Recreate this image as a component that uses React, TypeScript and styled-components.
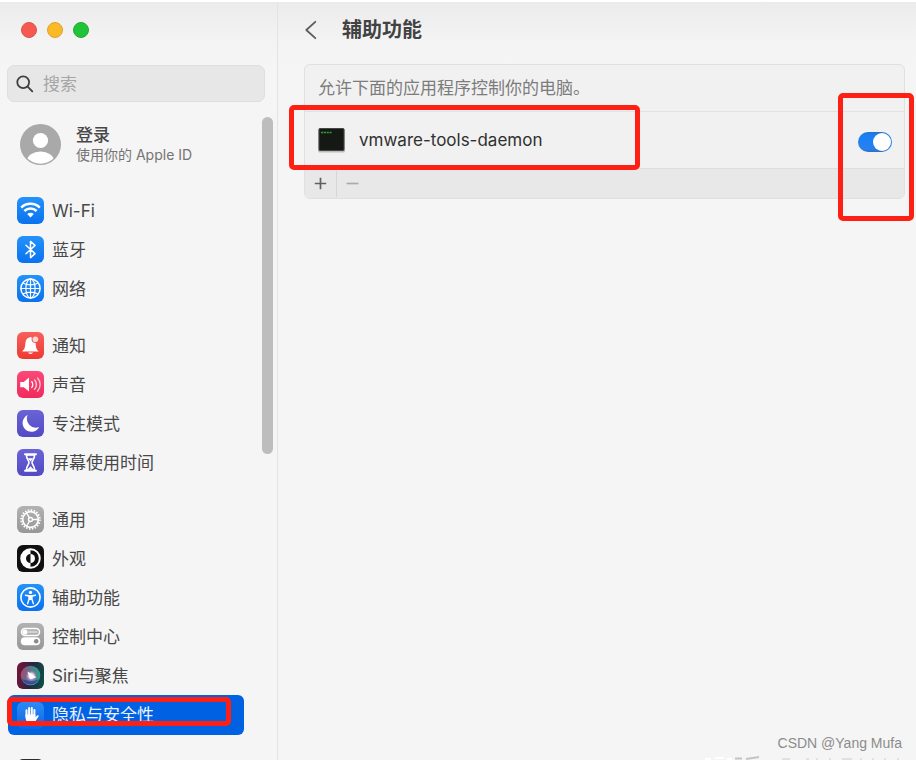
import React, { useState } from "react";
import styled, { createGlobalStyle, css } from "styled-components";

const GlobalStyle = createGlobalStyle`
  *, *::before, *::after { box-sizing: border-box; }
  html, body { margin: 0; background: #f5f5f5; }
  body, button, input {
    font-family: Inter, "Noto Sans CJK SC", sans-serif;
    color: #484848;
  }
`;

const Window = styled.div`
  position: relative;
  display: flex;
  height: 100vh;
  overflow: hidden;
  border-top: 2px solid #ffffff;
  background: linear-gradient(#ebebeb, #f3f3f3 36px, #f5f5f5 64px);
`;

const Sidebar = styled.aside`
  display: flex;
  flex-direction: column;
  flex: 0 0 278px;
  min-width: 0;
  border-right: 1px solid #e3e3e3;
`;

const TrafficLights = styled.div`
  display: flex;
  gap: 10px;
  padding: 20px 21px 27px;
`;

const Light = styled.button<{ $color: string; $edge: string }>`
  width: 16px;
  height: 16px;
  padding: 0;
  border: 1px solid ${(p) => p.$edge};
  border-radius: 50%;
  background: ${(p) => p.$color};
`;

const SearchBox = styled.label`
  display: flex;
  align-items: center;
  gap: 9px;
  height: 37px;
  margin: 0 12px 15px 7px;
  padding: 0 8px;
  border: 1px solid #dedede;
  border-radius: 7px;
  background: #e7e7e7;
`;

const SearchInput = styled.input`
  flex: 1;
  min-width: 0;
  padding: 0;
  border: 0;
  outline: 0;
  background: transparent;
  font-size: 17px;
  &::placeholder { color: #a6a6a6; opacity: 1; }
`;

const SidebarBody = styled.div`
  display: flex;
  flex: 1;
  min-height: 0;
`;

const SidebarList = styled.div`
  flex: 1;
  min-width: 0;
`;

const ScrollThumb = styled.div`
  width: 11px;
  height: 337px;
  margin-right: 4px;
  border-radius: 6px;
  background: #bdbdbd;
`;

const Account = styled.button`
  display: flex;
  align-items: center;
  gap: 15px;
  width: 100%;
  height: 54px;
  margin-bottom: 20px;
  padding: 0 0 0 20px;
  border: 0;
  background: transparent;
  text-align: left;
`;

const AccountText = styled.span`
  display: flex;
  flex-direction: column;
`;

const AccountName = styled.span`
  font-size: 17px;
  line-height: 20px;
  font-weight: 500;
`;

const AccountHint = styled.span`
  font-size: 14px;
  line-height: 19px;
  color: #747474;
`;

const Group = styled.ul`
  margin: 0 0 18px;
  padding: 0 0 0 8px;
  list-style: none;
`;

const Item = styled.li`
  position: relative;
  width: 236px;
`;

const ItemLink = styled.a<{ $selected?: boolean }>`
  display: flex;
  align-items: center;
  gap: 8px;
  height: 39px;
  padding: 0 9px;
  border-radius: 6px;
  color: #484848;
  font-size: 17px;
  line-height: 24px;
  text-decoration: none;
  ${(p) => p.$selected && css`
    height: 40px;
    background: #0061e3;
    color: #e9f1ff;
  `}
`;

const Tile = styled.span<{ $bg: string }>`
  display: grid;
  place-items: center;
  flex: none;
  width: 27px;
  height: 27px;
  border-radius: 6px;
  background: ${(p) => p.$bg};
`;

const markStyle = css`
  position: absolute;
  border: 5px solid #ff2015;
  border-radius: 5px;
  pointer-events: none;
`;

const PrivacyMark = styled.span`
  ${markStyle}
  inset: 2px 13px 9px -1px;
`;

const AppMark = styled.span`
  ${markStyle}
  top: -7px;
  left: -16px;
  width: 351px;
  height: 65px;
`;

const SwitchMark = styled.span`
  ${markStyle}
  top: -19px;
  right: -10px;
  width: 76px;
  height: 128px;
`;

const Main = styled.main`
  flex: 1;
  min-width: 0;
  padding: 0 11px 0 26px;
`;

const TitleBar = styled.header`
  display: flex;
  align-items: center;
  gap: 24px;
  height: 55px;
  margin-bottom: 7px;
`;

const BackButton = styled.button`
  display: flex;
  padding: 0;
  border: 0;
  background: transparent;
`;

const Title = styled.h1`
  margin: 0;
  font-size: 20px;
  line-height: 28px;
  font-weight: 700;
  color: #424242;
`;

const Panel = styled.section`
  border: 1px solid #e0e0e0;
  border-radius: 6px;
  background: #f1f1f1;
`;

const PanelNote = styled.p`
  height: 46px;
  margin: 0;
  padding: 0 13px;
  font-size: 17px;
  line-height: 46px;
  color: #7c7c7c;
`;

const AppRow = styled.div`
  position: relative;
  display: flex;
  align-items: center;
  gap: 13px;
  height: 57px;
  padding: 0 12px;
  border-top: 1px solid #e2e2e2;
`;

const AppName = styled.label`
  flex: 1;
  font-size: 17px;
  line-height: 24px;
  color: #303030;
`;

const Switch = styled.input`
  appearance: none;
  display: flex;
  align-items: center;
  width: 34px;
  height: 20px;
  margin: 4px 0 0;
  padding: 0 1px;
  border-radius: 10px;
  background: #c9c9c9;
  &::before {
    content: "";
    width: 18px;
    height: 18px;
    border-radius: 50%;
    background: #ffffff;
  }
  &:checked {
    justify-content: flex-end;
    background: linear-gradient(#2c6fc0, #1680f5 3px, #2a80ee 17px, #2c6fc0);
  }
`;

const PanelFooter = styled.div`
  display: flex;
  align-items: center;
  height: 30px;
  border-top: 1px solid #dedede;
  border-radius: 0 0 5px 5px;
  background: #e8e8e8;
`;

const FooterButton = styled.button`
  display: grid;
  place-items: center;
  width: 31px;
  height: 26px;
  padding: 0;
  border: 0;
  background: transparent;
  & + & { border-left: 1px solid #d6d6d6; }
`;

const Credit = styled.footer`
  position: absolute;
  right: 14px;
  bottom: 7px;
  font-family: "Liberation Sans", sans-serif;
  font-size: 14px;
  line-height: 20px;
  color: #8c8c8c;
`;

const FaintStamp = styled.svg`
  position: absolute;
  right: 10px;
  bottom: 0;
`;

const blue = "linear-gradient(#2492fb, #0a72ee)";
const red = "linear-gradient(#f8605c, #ee3932)";
const pink = "linear-gradient(#fb4a78, #f02a5c)";
const purple = "linear-gradient(#6a64d6, #5249c4)";
const gray = "linear-gradient(#b2b2b2, #979797)";
const black = "#101010";

const Svg = ({ children }: { children: React.ReactNode }) => (
  <svg width="27" height="27" viewBox="0 0 27 27" fill="none" stroke="#fff"
    strokeLinecap="round" strokeLinejoin="round" aria-hidden="true">{children}</svg>
);

const WifiIcon = () => (
  <Svg>
    <path d="M4.2 10.6C9.3 5.5 17.7 5.5 22.8 10.6" strokeWidth="2.5" strokeLinecap="butt" />
    <path d="M7.4 14C10.8 10.7 16.2 10.7 19.6 14" strokeWidth="2.5" strokeLinecap="butt" />
    <path d="M10.2 17C12 15.3 15 15.3 16.8 17L13.5 20.6Z" fill="#fff" stroke="none" />
  </Svg>
);

const BluetoothIcon = () => (
  <Svg><path d="M9 9.3L18 17.6L13.5 21.6V5.4L18 9.4L9 17.7" strokeWidth="1.5" /></Svg>
);

const GlobeIcon = () => (
  <Svg>
    <g strokeWidth="1.2">
      <circle cx="13.5" cy="13.5" r="9.6" strokeWidth="1.5" />
      <ellipse cx="13.5" cy="13.5" rx="4.6" ry="9.6" />
      <path d="M13.5 4V23M4 13.5H23M6 8C10 10.6 17 10.6 21 8M6 19C10 16.4 17 16.4 21 19" />
    </g>
  </Svg>
);

const BellIcon = () => (
  <Svg>
    <g stroke="none" fill="#fff">
      <path d="M5.2 19.4C7.6 17 8 15.8 8.3 11.8C8.5 8 10.2 5.9 12.5 5.6C13.3 4.6 14.2 4.7 14.9 5.7C13.8 8.3 15.6 11 18.6 10.9C18.9 15.5 19.4 17.2 21.8 19.4Z" />
      <path d="M11 20.6H16C15.5 22.5 11.5 22.5 11 20.6Z" />
      <circle cx="18.4" cy="7.3" r="2.8" fill="#ffd9d5" />
    </g>
  </Svg>
);

const SoundIcon = () => (
  <Svg>
    <path d="M3.2 11V16.2H6.8L12 20.6V6.6L6.8 11Z" fill="#fff" stroke="none" />
    <path d="M14.8 10.8C16 12.3 16 15 14.8 16.4" strokeWidth="1.4" />
    <path d="M17.6 8.9C20 11.5 20 15.7 17.6 18.3" strokeWidth="1.4" stroke="#ffd2dd" />
    <path d="M20.5 7C24 10.5 24 16.7 20.5 20.2" strokeWidth="1.4" stroke="#ffc0d0" />
  </Svg>
);

const MoonIcon = () => (
  <Svg><path d="M10.6 5.1A8.8 8.8 0 1 0 22.2 17.1A9.1 9.1 0 0 1 10.6 5.1Z" fill="#fff" stroke="none" /></Svg>
);

const HourglassIcon = () => (
  <Svg>
    <path d="M8 5.2H19M8 21.8H19" strokeWidth="2" />
    <path d="M9.4 6C9.4 10.2 12 11.4 12 13.5S9.4 17 9.4 21H17.6C17.6 17 15 15.6 15 13.5S17.6 10.2 17.6 6Z" strokeWidth="1.6" />
    <path d="M10.8 9.2H16.2L13.5 12.4ZM10.2 20.8L13.5 17.2L16.8 20.8Z" fill="#fff" stroke="none" />
  </Svg>
);

const GearIcon = () => (
  <Svg>
    <circle cx="13.5" cy="13.5" r="9.4" strokeWidth="1.8" strokeDasharray="1.5 1.45" strokeLinecap="butt" />
    <circle cx="13.5" cy="13.5" r="7.8" strokeWidth="1.7" />
    <circle cx="13.5" cy="13.5" r="2" strokeWidth="1.3" />
    <path d="M15.5 13.5H21M12.5 11.8L9.6 7M12.5 15.2L9.6 20" strokeWidth="1.4" />
  </Svg>
);

const AppearanceIcon = () => (
  <Svg>
    <circle cx="13.5" cy="13.5" r="9.3" strokeWidth="1.9" />
    <path d="M13.5 4.2A9.3 9.3 0 0 0 13.5 22.8V18A4.5 4.5 0 0 1 13.5 9Z" fill="#fff" stroke="none" />
    <path d="M13.5 9A4.5 4.5 0 0 1 13.5 18Z" fill="#fff" stroke="none" />
  </Svg>
);

const AccessibilityIcon = () => (
  <Svg>
    <circle cx="13.5" cy="13.5" r="9.6" strokeWidth="1.6" />
    <circle cx="13.5" cy="8.4" r="1.7" fill="#fff" stroke="none" />
    <path d="M8.5 11.2L12 12V15.3L10.6 19.7M18.5 11.2L15 12V15.3L16.4 19.7M8.5 11.2L13.5 12L18.5 11.2" strokeWidth="1.4" />
    <path d="M12 11.5H15V16H12Z" fill="#fff" stroke="none" />
  </Svg>
);

const ControlIcon = () => (
  <Svg>
    <rect x="4.5" y="5.6" width="18" height="6.8" rx="3.4" strokeWidth="1.5" />
    <circle cx="8" cy="9" r="2.6" fill="#fff" stroke="none" />
    <path d="M11 9H19.5" stroke="#d2d2d2" strokeWidth="2.5" />
    <rect x="3.8" y="14.3" width="19.4" height="8" rx="4" fill="#fff" stroke="none" />
    <circle cx="19.2" cy="18.3" r="2.3" fill="#8d8d8d" stroke="none" />
  </Svg>
);

const SiriIcon = () => (
  <Svg>
    <defs>
      <linearGradient id="siri-ring" x1="0" y1="0" x2="1" y2="0.3">
        <stop offset="0" stopColor="#d22f62" /><stop offset="0.5" stopColor="#4f7e8c" /><stop offset="1" stopColor="#27a58a" />
      </linearGradient>
      <radialGradient id="siri-core" cx="0.52" cy="0.5" r="0.5">
        <stop offset="0" stopColor="#ffffff" /><stop offset="0.35" stopColor="#dcd0ee" />
        <stop offset="0.7" stopColor="#b65a9b" stopOpacity="0.4" /><stop offset="1" stopColor="#3558a4" stopOpacity="0" />
      </radialGradient>
    </defs>
    <circle cx="13.5" cy="13.5" r="9.8" fill="url(#siri-ring)" stroke="none" />
    <path d="M5 17C8 23.5 18 24.5 22 17C17 20 11 19 5 17Z" fill="#3948a2" stroke="none" />
    <circle cx="14" cy="14" r="7.5" fill="url(#siri-core)" stroke="none" />
    <path d="M10.4 9.5L19.4 15.2L13.2 17Z" fill="#fff" stroke="none" />
  </Svg>
);

const HandIcon = () => (
  <Svg>
    <path d="M9.5 15V8.2M12.1 13V6M14.8 13V6M17.4 14V8" strokeWidth="2" />
    <path d="M8.5 12.5H18.4V15L20.6 13.3C21.7 13 22 13.8 21.4 14.7L18.2 19.6C16.5 22.2 11.5 22.2 9.8 19.6C8.7 17.9 8.5 16 8.5 12.5Z" fill="#fff" stroke="none" />
  </Svg>
);

type Entry = { label: string; bg: string; icon: React.ReactNode; selected?: boolean };

const groups: Entry[][] = [
  [
    { label: "Wi-Fi", bg: blue, icon: <WifiIcon /> },
    { label: "蓝牙", bg: blue, icon: <BluetoothIcon /> },
    { label: "网络", bg: blue, icon: <GlobeIcon /> },
  ],
  [
    { label: "通知", bg: red, icon: <BellIcon /> },
    { label: "声音", bg: pink, icon: <SoundIcon /> },
    { label: "专注模式", bg: purple, icon: <MoonIcon /> },
    { label: "屏幕使用时间", bg: purple, icon: <HourglassIcon /> },
  ],
  [
    { label: "通用", bg: gray, icon: <GearIcon /> },
    { label: "外观", bg: black, icon: <AppearanceIcon /> },
    { label: "辅助功能", bg: blue, icon: <AccessibilityIcon /> },
    { label: "控制中心", bg: gray, icon: <ControlIcon /> },
    { label: "Siri与聚焦", bg: "linear-gradient(100deg, #7a1438, #2b2540 50%, #0b5148)", icon: <SiriIcon /> },
    { label: "隐私与安全性", bg: "linear-gradient(#2f8af5, #0b66e6)", icon: <HandIcon />, selected: true },
  ],
  [{ label: "", bg: "#2c2c2e", icon: null }],
];

export default function App() {
  const [allowed, setAllowed] = useState(true);
  return (
    <>
      <GlobalStyle />
      <Window>
        <Sidebar>
          <TrafficLights>
            <Light $color="#f75950" $edge="#d9534c" aria-label="关闭" />
            <Light $color="#fbb827" $edge="#dba431" aria-label="最小化" />
            <Light $color="#1fc438" $edge="#26a638" aria-label="缩放" />
          </TrafficLights>
          <SearchBox>
            <svg width="18" height="18" viewBox="0 0 18 18" fill="none" stroke="#3f3f3f" strokeWidth="1.8" strokeLinecap="round" aria-hidden="true">
              <circle cx="7.2" cy="7.2" r="5.9" />
              <path d="M11.6 11.6L16.3 16.3" />
            </svg>
            <SearchInput type="text" placeholder="搜索" aria-label="搜索" />
          </SearchBox>
          <SidebarBody>
            <SidebarList>
              <Account>
                <svg width="41" height="41" viewBox="0 0 41 41" aria-hidden="true">
                  <defs><clipPath id="avatar"><circle cx="20.5" cy="20.5" r="19.2" /></clipPath></defs>
                  <circle cx="20.5" cy="20.5" r="20.5" fill="#a9a9a9" />
                  <circle cx="20.5" cy="16.5" r="7.6" fill="#fff" />
                  <ellipse cx="20.5" cy="37" rx="13.5" ry="9.5" fill="#fff" clipPath="url(#avatar)" />
                </svg>
                <AccountText>
                  <AccountName>登录</AccountName>
                  <AccountHint>使用你的 Apple ID</AccountHint>
                </AccountText>
              </Account>
              <nav>
                {groups.map((group, g) => (
                  <Group key={g}>
                    {group.map((entry) => (
                      <Item key={entry.label}>
                        <ItemLink href="#" $selected={entry.selected}>
                          <Tile $bg={entry.bg}>{entry.icon}</Tile>
                          {entry.label}
                        </ItemLink>
                        {entry.selected && <PrivacyMark />}
                      </Item>
                    ))}
                  </Group>
                ))}
              </nav>
            </SidebarList>
            <ScrollThumb />
          </SidebarBody>
        </Sidebar>
        <Main>
          <TitleBar>
            <BackButton aria-label="返回">
              <svg width="14" height="20" viewBox="0 0 14 20" fill="none" stroke="#5c5c5c" strokeWidth="1.8" strokeLinecap="round" strokeLinejoin="round">
                <path d="M11.3 1.8L2.3 10L11.3 18.2" />
              </svg>
            </BackButton>
            <Title>辅助功能</Title>
          </TitleBar>
          <Panel>
            <PanelNote>允许下面的应用程序控制你的电脑。</PanelNote>
            <AppRow>
              <svg width="29" height="26" viewBox="0 0 29 26" aria-hidden="true">
                <rect x="1" y="1.5" width="27" height="24" rx="1.5" fill="#bdbdbd" />
                <rect x="2" y="1.5" width="25" height="22" rx="1" fill="#161816" stroke="#454745" />
                <path d="M4 5.5H15" stroke="#2d9a33" strokeWidth="1.6" strokeDasharray="2.2 0.6" />
              </svg>
              <AppName htmlFor="daemon">vmware-tools-daemon</AppName>
              <Switch id="daemon" type="checkbox" role="switch" checked={allowed} onChange={(e) => setAllowed(e.target.checked)} />
              <AppMark />
              <SwitchMark />
            </AppRow>
            <PanelFooter>
              <FooterButton aria-label="添加">
                <svg width="13" height="13" viewBox="0 0 13 13" stroke="#606060" strokeWidth="1.7"><path d="M6.5 0.8V12.2M0.8 6.5H12.2" /></svg>
              </FooterButton>
              <FooterButton aria-label="移除">
                <svg width="13" height="13" viewBox="0 0 13 13" stroke="#ababab" strokeWidth="1.7"><path d="M0.5 6.5H12.5" /></svg>
              </FooterButton>
            </PanelFooter>
          </Panel>
        </Main>
        <FaintStamp width="204" height="4" viewBox="0 0 204 4" fill="none" aria-hidden="true">
          <path d="M3 3H9M13 2H22M25 3H30" stroke="#fff" strokeWidth="2" />
          <path d="M33 2.5H40M44 3L57 1" stroke="#c4c4c4" strokeWidth="2" />
          <path d="M80 3H88M104 3H107M114 3H116M127 3H129M140 3H150M158 3H160M170 3H172M182 3H184M195 3H197" stroke="#e0e0e0" strokeWidth="2" />
        </FaintStamp>
        <Credit>CSDN @Yang Mufa</Credit>
      </Window>
    </>
  );
}
